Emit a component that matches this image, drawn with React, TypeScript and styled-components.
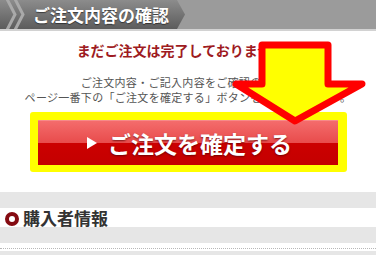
import React from "react";
import styled, { createGlobalStyle } from "styled-components";

const Global = createGlobalStyle`
  html, body { margin: 0; padding: 0; background: #fff; }
  body { font-family: "Noto Sans CJK JP", "Noto Sans", sans-serif; }
`;

const Page = styled.div`
  position: relative;
  width: 376px;
  height: 255px;
  overflow: hidden;
  background: #fff;
`;

const Header = styled.header`
  display: flex;
  height: 29px;
  background: #9b9b9b;
  border-bottom: 2px solid #d2d2d2;
`;

const Tab = styled.div`
  display: flex;
  align-items: center;
  width: 185px;
  height: 29px;
  background: linear-gradient(#8c8c8c, #5c5c5c);
  clip-path: polygon(0 0, 177px 0, 185px 14.5px, 177px 29px, 0 29px);
`;

const Chevrons = styled.svg`
  flex: none;
  width: 33px;
  height: 29px;
`;

const Title = styled.h1`
  margin: 0;
  font-size: 17px;
  font-weight: 700;
  line-height: 29px;
  color: #fff;
  text-shadow: 0 1px 1px rgba(0, 0, 0, 0.5);
  white-space: nowrap;
`;

const Notice = styled.section`
  display: flex;
  flex-direction: column;
  align-items: center;
  padding-top: 9px;
`;

const Warning = styled.p`
  margin: 0;
  font-size: 14px;
  line-height: 20px;
  font-weight: 700;
  color: #9e1b22;
  white-space: nowrap;
`;

const Guide = styled.p`
  margin: 15px 0 0;
  font-size: 11px;
  line-height: 15px;
  letter-spacing: 0.3px;
  color: #555;
  text-align: center;
  white-space: nowrap;
`;

const Highlight = styled.div`
  width: 300px;
  margin: 7px auto 20px;
  padding: 8px 9px 7px 8px;
  background: #ffff00;
  border-radius: 3px;
`;

const ConfirmButton = styled.button`
  display: flex;
  align-items: center;
  justify-content: center;
  gap: 11px;
  width: 300px;
  height: 45px;
  padding: 0 0 0 4px;
  border: none;
  border-top: 1px solid #f78a8a;
  background: linear-gradient(
    #f46c6c 0%,
    #e84c4c 49%,
    #cc0000 50%,
    #c40000 100%
  );
  color: #fff;
  font-family: inherit;
  font-size: 23px;
  font-weight: 700;
  line-height: 1;
  text-shadow: 0 1px 2px rgba(80, 0, 0, 0.7);
  cursor: pointer;
`;

const PlayMark = styled.span`
  width: 0;
  height: 0;
  border-left: 10px solid #fff;
  border-top: 6px solid transparent;
  border-bottom: 6px solid transparent;
`;

const Band = styled.div<{ $h: number }>`
  height: ${(p) => p.$h}px;
  background: #e6e6e6;
`;

const SectionHead = styled.h2`
  display: flex;
  align-items: center;
  gap: 4px;
  height: 19px;
  margin: 0;
  padding-left: 5px;
  background: #fff;
  font-size: 17px;
  font-weight: 700;
  color: #333;
  line-height: 19px;
`;

const Ring = styled.span`
  box-sizing: border-box;
  flex: none;
  width: 14px;
  height: 14px;
  border-radius: 50%;
  border: 4px solid #850b12;
  margin-top: 2px;
`;

const Divider = styled.div`
  height: 8px;
  background: #fff;
  box-sizing: border-box;
  padding-top: 5px;
  &::after {
    content: "";
    display: block;
    border-top: 1px dotted #b8b8b8;
  }
`;

const ArrowOverlay = styled.svg`
  position: absolute;
  left: 222px;
  top: 35px;
  width: 150px;
  height: 100px;
  overflow: visible;
`;

export default function App() {
  return (
    <Page>
      <Global />
      <Header>
        <Tab>
          <Chevrons viewBox="0 0 33 29">
            <polyline points="7,-1 15,14.5 7,30" fill="none" stroke="#a9a9a9" strokeWidth="3" />
            <polyline points="15,-1 23,14.5 15,30" fill="none" stroke="#a9a9a9" strokeWidth="3" />
          </Chevrons>
          <Title>ご注文内容の確認</Title>
        </Tab>
      </Header>
      <Notice>
        <Warning>まだご注文は完了しておりません。</Warning>
        <Guide>
          ご注文内容・ご記入内容をご確認のうえ、
          <br />
          ページ一番下の「ご注文を確定する」ボタンを押してください。
        </Guide>
      </Notice>
      <Highlight>
        <ConfirmButton>
          <PlayMark />
          ご注文を確定する
        </ConfirmButton>
      </Highlight>
      <Band $h={16} />
      <SectionHead>
        <Ring />
        購入者情報
      </SectionHead>
      <Band $h={16} />
      <Divider />
      <Band $h={8} />
      <ArrowOverlay viewBox="0 0 150 100">
        <polygon
          points="40,10 106,10 106,49 140,49 73,86 14,49 40,49"
          fill="#ffff00"
          stroke="#ff0000"
          strokeWidth="7"
          strokeLinejoin="round"
        />
      </ArrowOverlay>
    </Page>
  );
}
